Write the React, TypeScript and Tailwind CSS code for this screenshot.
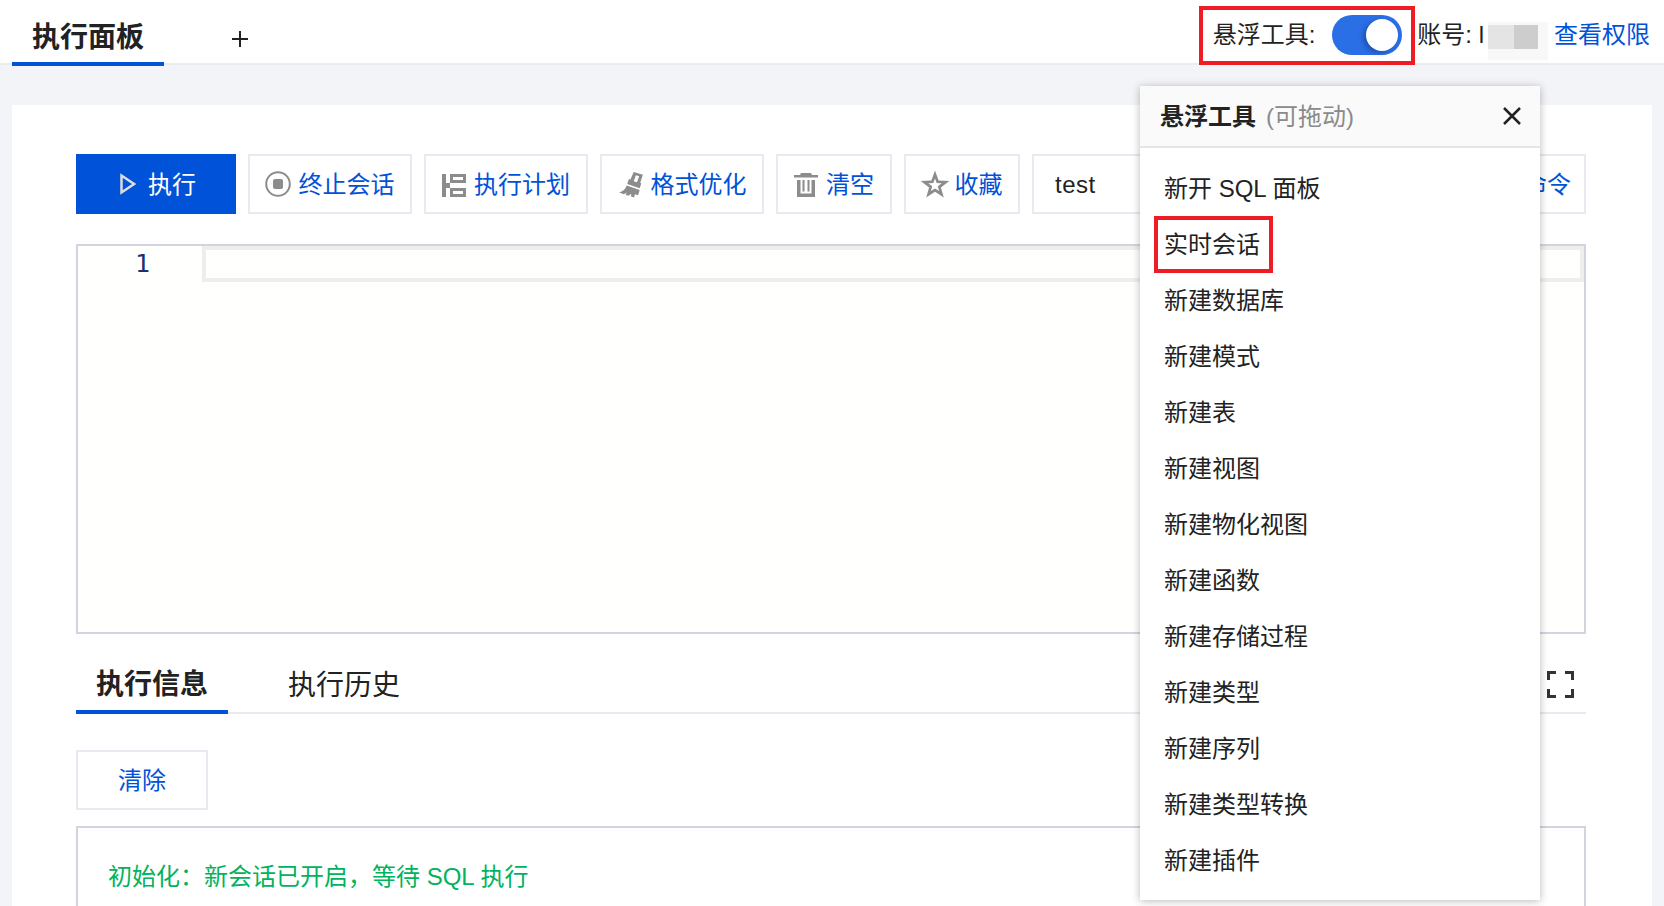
const menuItems = [
  "新开 SQL 面板",
  "实时会话",
  "新建数据库",
  "新建模式",
  "新建表",
  "新建视图",
  "新建物化视图",
  "新建函数",
  "新建存储过程",
  "新建类型",
  "新建序列",
  "新建类型转换",
  "新建插件",
];

function StopIcon() {
  return (
    <svg width="26" height="26" viewBox="0 0 26 26" fill="none">
      <circle cx="13" cy="13" r="11.800" stroke="#8c8c8c" strokeWidth="2" />
      <rect x="8" y="8" width="10" height="10" rx="2" fill="#8c8c8c" />
    </svg>
  );
}

function PlanIcon() {
  return (
    <svg width="24" height="23" viewBox="0 0 24 23" fill="#8c8c8c" className="mt-[3px]">
      <path d="M0 0h4v9h4v5H4v9H0z" />
      <path fillRule="evenodd" d="M8 0h16v9H8zM11 3v3h10V3z" />
      <path fillRule="evenodd" d="M8 14h16v9H8zM11 17v3h10v-3z" />
    </svg>
  );
}

function BrushIcon() {
  return (
    <svg width="26" height="26" viewBox="0 0 24 24" fill="#8c8c8c" className="mt-[2px]">
      <path fillRule="evenodd" d="M14.500 0L23 2.500l-2.500 7.500 1 .5-1.500 4.500L8.500 11 10 6.500l1.500.5zM16.500 3l-2 5.500 3 1 2-5.500z" />
      <path d="M8 12.500l12 4-1.500 5-3-1-.5 3-3-1 .2-2.500-2.700 2-2.500-1 1-2-2.500 1.500L1 19c3.500-1 6-3 7-6.500z" />
    </svg>
  );
}

function TrashIcon() {
  return (
    <svg width="24" height="24" viewBox="0 0 24 24" fill="#8c8c8c" className="mt-[1px]">
      <path d="M0 2h6l1-2h10l1 2h6v2.500H0z" />
      <path d="M3 7h3.500v13.500h11V7H21v17H3z" />
      <path d="M8.500 7h2v11.500h-2zM13.500 7h2v11.500h-2z" />
    </svg>
  );
}

function StarIcon() {
  return (
    <svg width="28" height="28" viewBox="0 0 28 28" fill="#8c8c8c" className="overflow-visible">
      <path
        fillRule="evenodd"
        d="M14 .5l3.600 10 10.700.4-8.400 6.500 2.900 10.200L14 21.700l-8.800 5.900 2.900-10.200-8.400-6.500 10.700-.4zM14 8.500l-1.700 4.600-5 .2 3.900 3-1.300 4.800 4.100-2.700 4.100 2.700-1.300-4.800 3.900-3-5-.2z"
      />
    </svg>
  );
}

function ToolButton({ width, gap, icon, label }: { width: string; gap: string; icon: React.ReactNode; label: string }) {
  return (
    <button className={`flex h-[60px] items-center justify-center border-2 border-[#e7eaf1] bg-white text-[24px] text-[#0052d9] ${width} ${gap}`}>
      {icon}
      <span className="pt-[2px]">{label}</span>
    </button>
  );
}

export default function App() {
  return (
    <div className="relative h-[906px] w-[1664px] overflow-hidden bg-[#f2f4f8] font-['Liberation_Sans','Noto_Sans_CJK_SC',sans-serif] text-[24px] text-[#222222]">
      {/* top bar */}
      <header className="flex h-[65px] items-stretch border-b-2 border-[#e9ecf1] bg-white">
        <div className="ml-[12px] flex h-[66px] w-[152px] items-center justify-center border-b-4 border-[#0052d9] pt-[14px] text-[28px] font-bold">
          执行面板
        </div>
        <div className="ml-[68px] flex items-center pt-[14px]">
          <svg width="16" height="16" viewBox="0 0 16 16" stroke="#222222" strokeWidth="2">
            <path d="M8 0v16M0 8h16" />
          </svg>
        </div>
        <div className="ml-auto mr-[14px] flex items-center pt-[6px]">
          <span>悬浮工具:</span>
          <div className="ml-[17px] flex h-[40px] w-[70px] items-center justify-end rounded-full bg-[#2b6fe6] pr-[4px]">
            <div className="h-[32px] w-[32px] rounded-full bg-white shadow-[-3px_2px_5px_rgba(0,30,90,0.35)]" />
          </div>
          <span className="ml-[15px]">账号: l</span>
          <div className="relative ml-[4px] mt-[13px] h-[38px] w-[60px] bg-[#f8f8f8]">
            <div className="absolute left-0 top-[3px] flex h-[24px]">
              <div className="w-[26px] bg-[#e4e4e4]" />
              <div className="w-[24px] bg-[#cdcdcd]" />
            </div>
          </div>
          <a className="ml-[6px] text-[#0052d9]">查看权限</a>
        </div>
      </header>

      {/* main card */}
      <main className="mx-[12px] mt-[40px] h-[860px] bg-white pl-[64px] pr-[66px] pt-[49px]">
        <div className="flex gap-[12px]">
          <button className="flex h-[60px] w-[160px] items-center justify-center gap-[12px] bg-[#0052d9] pl-[4px] text-[24px] text-white">
            <svg width="16" height="22" viewBox="0 0 16 22" fill="none" stroke="#dcdcdc" strokeWidth="2.500">
              <path d="M1.500 2.500v17L14 11z" />
            </svg>
            <span className="pt-[2px]">执行</span>
          </button>
          <ToolButton width="w-[164px]" gap="gap-[8px] pr-[1px]" icon={<StopIcon />} label="终止会话" />
          <ToolButton width="w-[164px]" gap="gap-[8px]" icon={<PlanIcon />} label="执行计划" />
          <ToolButton width="w-[164px]" gap="gap-[7px]" icon={<BrushIcon />} label="格式优化" />
          <ToolButton width="w-[116px]" gap="gap-[8px]" icon={<TrashIcon />} label="清空" />
          <ToolButton width="w-[116px]" gap="gap-[6px] pr-[1px]" icon={<StarIcon />} label="收藏" />
          <div className="flex h-[60px] w-[180px] items-center border-2 border-[#e7eaf1] pl-[21px] pt-[2px] tracking-[0.5px]">test</div>
          <button className="ml-auto h-[60px] w-[160px] border-2 border-[#e7eaf1] pr-[13px] pt-[2px] text-right text-[#0052d9]">常用命令</button>
        </div>

        {/* editor */}
        <div className="mt-[30px] flex h-[390px] border-2 border-[#d0d5df] bg-[#fffffd]">
          <div className="w-[124px] pr-[52px] pt-[3px] text-right font-['DejaVu_Sans_Mono',monospace] text-[25px] leading-[30px] text-[#1c2f72]">
            1
          </div>
          <div className="h-[36px] flex-1 border-4 border-[#eeeeee]" />
        </div>

        {/* result tabs */}
        <div className="mt-[26px] flex h-[54px] items-stretch border-b-2 border-[#e7eaf1]">
          <div className="-mb-[2px] flex w-[152px] items-center justify-center border-b-4 border-[#0052d9] text-[28px] font-bold">
            执行信息
          </div>
          <div className="ml-[60px] flex items-center text-[28px]">执行历史</div>
          <div className="ml-auto flex items-start pr-[12px] pt-[11px]">
            <svg width="27" height="27" viewBox="0 0 27 27" fill="none" stroke="#333333" strokeWidth="3">
              <path d="M1.500 9V1.500H9M18 1.500h7.500V9M1.500 18v7.500H9M18 25.500h7.500V18" />
            </svg>
          </div>
        </div>

        <button className="mt-[36px] h-[60px] w-[132px] border-2 border-[#e7eaf1] pt-[2px] text-[#0052d9]">清除</button>

        <div className="mt-[16px] h-[200px] border-2 border-[#d0d5df] px-[30px] pt-[33px] leading-[32px] text-[#00b35c]">
          {"初始化\uFF1A新会话已开启\uFF0C等待 SQL 执行"}
        </div>
      </main>

      {/* floating tool */}
      <div className="absolute left-[1140px] top-[86px] w-[400px] bg-white shadow-[0_1px_8px_rgba(0,0,0,0.28)]">
        <div className="flex h-[62px] items-center border-b-2 border-[#e3e5e9] bg-[#fafafa] px-[20px] pr-[19px]">
          <span className="pt-[2px] font-bold">悬浮工具</span>
          <span className="ml-[10px] pt-[2px] text-[#8a8a8a]">(可拖动)</span>
          <svg className="ml-auto" width="18" height="18" viewBox="0 0 18 18" stroke="#222222" strokeWidth="2.500">
            <path d="M1 1l16 16M17 1L1 17" />
          </svg>
        </div>
        <ul className="pb-[11px] pt-[13px]">
          {menuItems.map((item) => (
            <li key={item} className="h-[56px] pl-[24px] leading-[56px]">
              {item}
            </li>
          ))}
        </ul>
      </div>

      {/* red annotation boxes */}
      <div className="absolute left-[1199px] top-[6px] h-[59px] w-[216px] border-4 border-[#ee1c25]" />
      <div className="absolute left-[1154px] top-[216px] h-[57px] w-[119px] border-4 border-[#ee1c25]" />
    </div>
  );
}
